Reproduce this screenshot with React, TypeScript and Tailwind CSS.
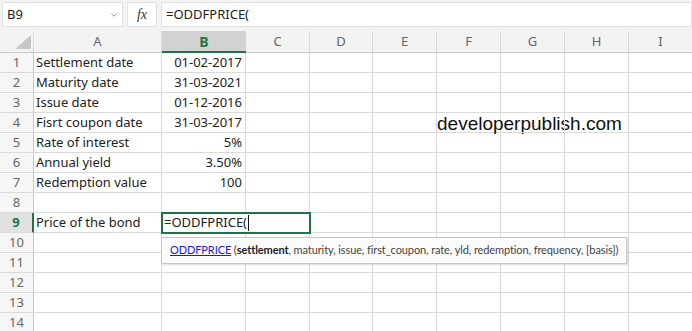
import React from 'react';
import { ChevronDown } from 'lucide-react';

const cols = [
  { label: 'A', w: 'w-[128px]' },
  { label: 'B', w: 'w-[84px]' },
  { label: 'C', w: 'w-[64px]' },
  { label: 'D', w: 'w-[63px]' },
  { label: 'E', w: 'w-[64px]' },
  { label: 'F', w: 'w-[64px]' },
  { label: 'G', w: 'w-[64px]' },
  { label: 'H', w: 'w-[64px]' },
  { label: 'I', w: 'w-[64px]' },
];

const data: Record<number, [string, string]> = {
  1: ['Settlement date', '01-02-2017'],
  2: ['Maturity date', '31-03-2021'],
  3: ['Issue date', '01-12-2016'],
  4: ['Fisrt coupon date', '31-03-2017'],
  5: ['Rate of interest', '5%'],
  6: ['Annual yield', '3.50%'],
  7: ['Redemption value', '100'],
  9: ['Price of the bond', ''],
};

const font = { fontFamily: '"Segoe UI", "Noto Sans", "Open Sans", sans-serif' };

export default function App() {
  const rows = Array.from({ length: 14 }, (_, i) => i + 1);

  return (
    <div className="w-[692px] h-[331px] overflow-hidden bg-white relative text-[#222]" style={font}>
      {/* Formula bar */}
      <div className="h-[31px] bg-[#f3f3f3] flex items-start pt-[2px] gap-[4px] pl-[2px]">
        <div className="w-[121px] h-[25px] bg-white border border-[#e1e1e1] flex items-center justify-between pl-[4px] pr-[3px] text-[13px]">
          <span>B9</span>
          <ChevronDown size={10} strokeWidth={1.5} className="text-[#555]" />
        </div>
        <div className="w-[30px] h-[25px] bg-white border border-[#e1e1e1] flex items-center justify-center text-[14px] text-[#333] italic" style={{ fontFamily: '"Liberation Serif", serif' }}>
          fx
        </div>
        <div className="flex-1 h-[25px] bg-white border border-[#e1e1e1] flex items-center pl-[4px] text-[13px]">
          =ODDFPRICE(
        </div>
      </div>

      {/* Column headers */}
      <div className="h-[22px] flex bg-[#f3f3f3] border-b border-[#c8c8c8]">
        <div className="w-[34px] shrink-0 relative border-r border-[#dadada]">
          <svg width="16" height="14" viewBox="0 0 16 14" className="absolute right-[2px] bottom-[3px]">
            <polygon points="16,0 16,14 0,14" fill="#c6c6c6" />
          </svg>
        </div>
        {cols.map((c) =>
          c.label === 'B' ? (
            <div key={c.label} className={`${c.w} shrink-0 flex items-center justify-center bg-[#d2d2d2] border-b-2 border-[#217346] text-[14px] font-bold text-[#217346] -mb-px`}>
              {c.label}
            </div>
          ) : (
            <div key={c.label} className={`${c.w} shrink-0 flex items-center justify-center border-r border-[#dadada] text-[13px] text-[#666]`}>
              {c.label}
            </div>
          )
        )}
      </div>

      {/* Rows */}
      {rows.map((r) => {
        const sel = r === 9;
        const d = data[r];
        return (
          <div key={r} className="h-[20px] flex">
            <div className={`w-[34px] shrink-0 flex items-center justify-center text-[13px] border-b border-[#dadada] ${sel ? 'bg-[#e1e1e1] font-bold text-[#217346] border-r-2 border-r-[#217346]' : 'bg-[#f6f6f6] text-[#666] border-r border-r-[#c8c8c8]'}`}>
              {r}
            </div>
            {cols.map((c) => (
              <div key={c.label} className={`${c.w} shrink-0 border-r border-b border-[#dadada] flex items-center text-[13px] whitespace-nowrap overflow-visible relative ${c.label === 'B' ? 'justify-end pr-[3px]' : 'pl-[2px]'}`}>
                {c.label === 'A' && d ? d[0] : null}
                {c.label === 'B' && d ? d[1] : null}
                {c.label === 'F' && r === 4 ? (
                  <span className="absolute left-0 top-[-3px] text-[19px] text-[#111]" style={{ fontFamily: '"Liberation Sans", Arial, sans-serif' }}>
                    developerpublish.com
                  </span>
                ) : null}
              </div>
            ))}
          </div>
        );
      })}

      {/* Editing cell */}
      <div className="absolute left-[161px] top-[212px] w-[150px] h-[22px] border-2 border-[#217346] bg-white flex items-center pl-[1px] text-[13px]">
        =ODDFPRICE(<span className="inline-block w-px h-[16px] bg-[#111] ml-px" />
      </div>

      {/* Function tooltip */}
      <div className="absolute left-[161px] top-[237px] w-[466px] h-[27px] border border-[#c6c6c6] bg-[#fbfbfb] shadow-[1px_1px_2px_rgba(0,0,0,0.15)] flex items-center pl-[8px] text-[11px] tracking-[-0.1px] text-[#444] whitespace-nowrap" style={{ fontFamily: 'Lato, "Noto Sans", sans-serif' }}>
        <span className="text-[#1c1cd0] underline">ODDFPRICE</span>
        <span>&nbsp;(<b className="text-[#222]">settlement</b>, maturity, issue, first_coupon, rate, yld, redemption, frequency, [basis])</span>
      </div>
    </div>
  );
}
